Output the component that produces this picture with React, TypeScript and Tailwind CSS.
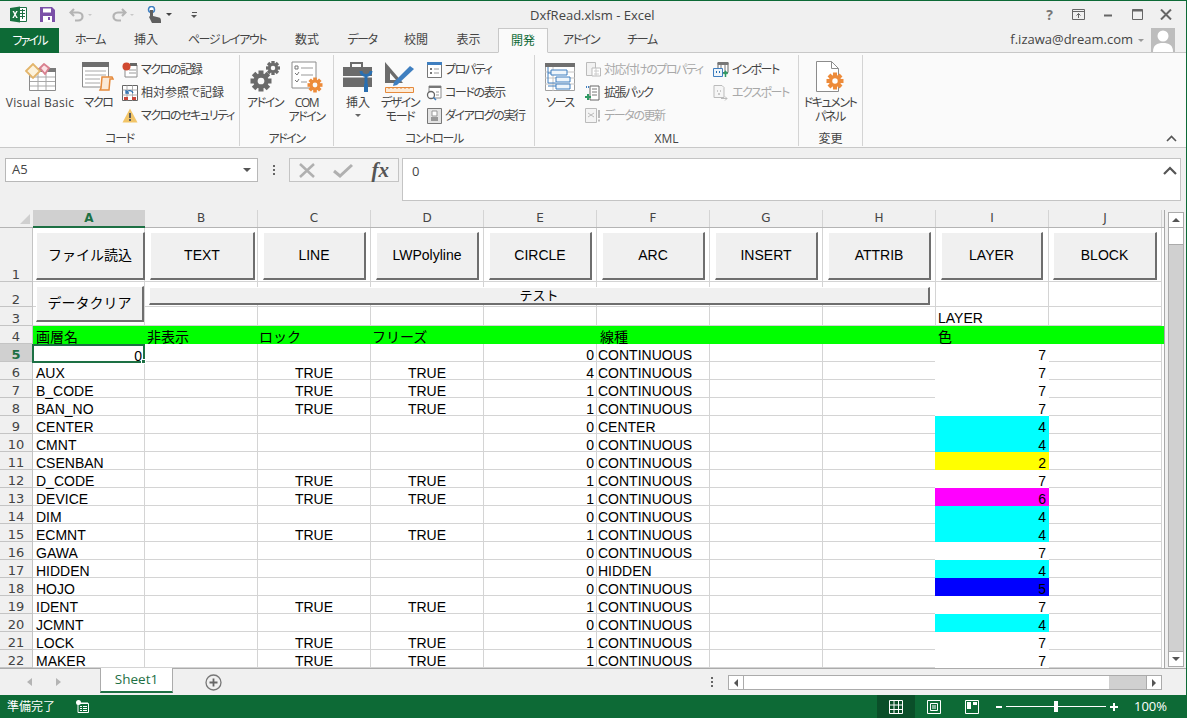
import React from "react";

const JP = "font-['Liberation_Sans','Noto_Sans_CJK_JP',sans-serif]";
const UI = "font-['Open_Sans','Noto_Sans_CJK_JP',sans-serif]";
const KANA = "tracking-[-1.4px]";
const WIDE = "tracking-normal";

const tabs = [
  { label: "ホーム", w: "w-[62px]", t: KANA },
  { label: "挿入", w: "w-[50px]", t: WIDE },
  { label: "ページ レイアウト", w: "w-[112px]", t: KANA },
  { label: "数式", w: "w-[48px]", t: WIDE },
  { label: "データ", w: "w-[62px]", t: KANA },
  { label: "校閲", w: "w-[46px]", t: WIDE },
  { label: "表示", w: "w-[59px]", t: WIDE },
];

const cols = [
  { name: "A", w: "w-[112px]" },
  { name: "B", w: "w-[113px]" },
  { name: "C", w: "w-[113px]" },
  { name: "D", w: "w-[113px]" },
  { name: "E", w: "w-[113px]" },
  { name: "F", w: "w-[113px]" },
  { name: "G", w: "w-[113px]" },
  { name: "H", w: "w-[113px]" },
  { name: "I", w: "w-[113px]" },
  { name: "J", w: "w-[113px]" },
];

// 行データ: 名前, TRUE列あり, E列, F列, I列, 色
const rows: [string, boolean, string, string, string, string][] = [
  ["0", false, "0", "CONTINUOUS", "7", "white"],
  ["AUX", true, "4", "CONTINUOUS", "7", "white"],
  ["B_CODE", true, "1", "CONTINUOUS", "7", "white"],
  ["BAN_NO", true, "1", "CONTINUOUS", "7", "white"],
  ["CENTER", false, "0", "CENTER", "4", "cyan"],
  ["CMNT", false, "0", "CONTINUOUS", "4", "cyan"],
  ["CSENBAN", false, "0", "CONTINUOUS", "2", "yellow"],
  ["D_CODE", true, "1", "CONTINUOUS", "7", "white"],
  ["DEVICE", true, "1", "CONTINUOUS", "6", "magenta"],
  ["DIM", false, "0", "CONTINUOUS", "4", "cyan"],
  ["ECMNT", true, "1", "CONTINUOUS", "4", "cyan"],
  ["GAWA", false, "0", "CONTINUOUS", "7", "white"],
  ["HIDDEN", false, "0", "HIDDEN", "4", "cyan"],
  ["HOJO", false, "0", "CONTINUOUS", "5", "blue"],
  ["IDENT", true, "1", "CONTINUOUS", "7", "white"],
  ["JCMNT", false, "0", "CONTINUOUS", "4", "cyan"],
  ["LOCK", true, "1", "CONTINUOUS", "7", "white"],
  ["MAKER", true, "1", "CONTINUOUS", "7", "white"],
];

const fill: Record<string, string> = {
  white: "bg-white border-white",
  cyan: "bg-[#00ffff] border-[#00ffff]",
  yellow: "bg-[#ffff00] border-[#ffff00]",
  magenta: "bg-[#ff00ff] border-[#ff00ff]",
  blue: "bg-[#0000ff] border-[#0000ff]",
};

const sheetButtons = [
  { label: "ファイル読込", pos: "left-[36px] w-[109px]" },
  { label: "TEXT", pos: "left-[150px] w-[105px]" },
  { label: "LINE", pos: "left-[263px] w-[103px]" },
  { label: "LWPolyline", pos: "left-[376px] w-[103px]" },
  { label: "CIRCLE", pos: "left-[489px] w-[103px]" },
  { label: "ARC", pos: "left-[602px] w-[103px]" },
  { label: "INSERT", pos: "left-[715px] w-[103px]" },
  { label: "ATTRIB", pos: "left-[828px] w-[103px]" },
  { label: "LAYER", pos: "left-[941px] w-[102px]" },
  { label: "BLOCK", pos: "left-[1053px] w-[104px]" },
];

function Big({ icon, lines, w, arrow, t = KANA }: { icon: React.ReactNode; lines: string[]; w: string; arrow?: boolean; t?: string }) {
  return (
    <div className={`${w} shrink-0 flex flex-col items-center`}>
      <div className="h-[38px] flex items-center justify-center">{icon}</div>
      {lines.map((l) => (
        <div key={l} className={`h-[14px] leading-[14px] text-[12px] text-[#444] whitespace-nowrap [font-feature-settings:'palt'] ${t}`}>
          {l}
        </div>
      ))}
      {arrow && <div className="mt-[4px] w-0 h-0 border-x-[3px] border-t-[3px] border-x-transparent border-t-[#666]" />}
    </div>
  );
}

function Small({ icon, label, off, t = KANA }: { icon: React.ReactNode; label: string; off?: boolean; t?: string }) {
  return (
    <div className="h-[23px] flex items-center gap-[3px] whitespace-nowrap">
      <div className="w-[16px] h-[16px] flex items-center justify-center shrink-0">{icon}</div>
      <span className={`text-[12px] [font-feature-settings:'palt'] ${t} ${off ? "text-[#a8a8a8]" : "text-[#444]"}`}>{label}</span>
    </div>
  );
}

function Group({ w, label, children, t = KANA }: { w: string; label: string; children: React.ReactNode; t?: string }) {
  return (
    <div className={`${w} shrink-0 h-[91px] border-r border-[#d4d4d4] flex flex-col`}>
      <div className="flex-1 flex pt-[3px]">{children}</div>
      <div className={`h-[15px] leading-[15px] text-center text-[12px] text-[#444] [font-feature-settings:'palt'] ${t}`}>{label}</div>
    </div>
  );
}

const Gear = ({ x, y, r, c, hole = "#fafafa" }: { x: number; y: number; r: number; c: string; hole?: string }) => (
  <g>
    {[0, 45, 90, 135].map((a) => (
      <rect key={a} x={x - r * 0.24} y={y - r} width={r * 0.48} height={r * 2} fill={c} transform={`rotate(${a} ${x} ${y})`} />
    ))}
    <circle cx={x} cy={y} r={r * 0.72} fill={c} />
    <circle cx={x} cy={y} r={r * 0.32} fill={hole} />
  </g>
);

const VbIcon = (
  <svg width="31" height="28" viewBox="0 0 31 28">
    <path d="M4.500 5.500h26v22h-26z" fill="#fff" stroke="#8c8c8c" />
    <path d="M4 5h27v4H4z" fill="#7a7a7a" />
    <path d="M5 14h25M5 18.500h25M5 23h25M13 9v18M21 9v18" stroke="#a8a8a8" />
    <path d="M1 8l7-7 7 7-7 7z" fill="#fdf3dc" stroke="#e3b56b" strokeWidth="1.800" />
    <path d="M15 5l4-4 5 4-4 6z" fill="#fbe3e6" stroke="#d9808f" strokeWidth="1.800" />
  </svg>
);
const MacroIcon = (
  <svg width="32" height="30" viewBox="0 0 32 30">
    <path d="M.5 1h26v24H.5z" fill="#fff" stroke="#8c8c8c" />
    <path d="M0 0h27v5H0z" fill="#6f6f6f" />
    <path d="M3 9h21M3 13h21M3 17h15M3 21h15" stroke="#a8a8a8" />
    <path d="M20 15h10l1 2h-3l-1 11h-9l1-2z" fill="#fbe9d7" stroke="#e58a3c" strokeWidth="1.500" />
  </svg>
);
const RecordIcon = (
  <svg width="16" height="16" viewBox="0 0 16 16">
    <path d="M3 3h12v12H3z" fill="#fff" stroke="#8c8c8c" />
    <path d="M8 1h7v3H8z" fill="#666" />
    <path d="M7 8h7M7 11h7" stroke="#999" />
    <circle cx="4.500" cy="4.500" r="4" fill="#d0482f" />
  </svg>
);
const RelativeIcon = (
  <svg width="16" height="16" viewBox="0 0 16 16">
    <path d="M.5.5h15v15H.5z" fill="#fff" stroke="#666" />
    <path d="M.5 5h15M.5 10h15M5 .5v15M10.500 .5v15" stroke="#aaa" />
    <path d="M2 12h4v3H2zM10 12h4v3h-4z" fill="#c9473a" />
    <path d="M5 7c1-2 5-2 6 1M4 5v3h3" fill="none" stroke="#2a6fb0" strokeWidth="1.300" />
  </svg>
);
const WarnIcon = (
  <svg width="16" height="15" viewBox="0 0 16 15">
    <path d="M8 .5L15.500 14.500H.5z" fill="#f2c568" />
    <path d="M7 5h2v5H7zM7 11h2v2H7z" fill="#5c5c5c" />
  </svg>
);
const AddinIcon = (
  <svg width="30" height="32" viewBox="0 0 30 32">
    <Gear x={11} y={20} r={10.500} c="#6b6b6b" />
    <Gear x={23} y={7} r={7} c="#6b6b6b" />
  </svg>
);
const ComIcon = (
  <svg width="32" height="32" viewBox="0 0 32 32">
    <path d="M1 1h24v26H1z" fill="#fff" stroke="#8c8c8c" />
    <path d="M4 5h3v3H4zM4 12l2 2 2-3M4 19l2 2 2-3" fill="none" stroke="#777" />
    <path d="M10 7h12M10 14h12M10 21h6" stroke="#999" />
    <Gear x={24} y={24} r={7.500} c="#ed8b3a" />
  </svg>
);
const InsertIcon = (
  <svg width="32" height="30" viewBox="0 0 32 30">
    <path d="M9 5V1h11v4" fill="none" stroke="#6b6b6b" strokeWidth="2" />
    <path d="M1 5h29v9H1zM1 15.500h29V25H1z" fill="#6b6b6b" />
    <path d="M24 13v10M19 9c0 6 10 6 10 0" fill="none" stroke="#2a6fb0" strokeWidth="3" />
    <path d="M22 22h4v8h-4z" fill="#2a6fb0" />
  </svg>
);
const DesignIcon = (
  <svg width="32" height="32" viewBox="0 0 32 32">
    <path d="M1 1l18 21H1z" fill="#6b6b6b" />
    <path d="M6 12l6 7H6z" fill="#fafafa" />
    <path d="M10 21L26 5l4 3-17 16-4 1z" fill="#3f7fc0" />
    <path d="M1.500 26.500h28v5h-28z" fill="#fdebd7" stroke="#e58a3c" />
    <path d="M5 26v2M9 26v2M13 26v2M17 26v2M21 26v2M25 26v2" stroke="#e58a3c" />
  </svg>
);
const PropIcon = (
  <svg width="15" height="16" viewBox="0 0 15 16">
    <path d="M.5.5h14v15H.5z" fill="#fff" stroke="#777" />
    <path d="M0 0h15v3H0z" fill="#3f7fc0" />
    <path d="M3 6h2v2H3zM3 10h2v2H3z" fill="#777" />
    <path d="M7 7h5M7 11h5" stroke="#999" />
  </svg>
);
const CodeIcon = (
  <svg width="16" height="16" viewBox="0 0 16 16">
    <path d="M3 1h12v12H3z" fill="#fff" stroke="#8c8c8c" />
    <path d="M3 1h12v2H3z" fill="#777" />
    <circle cx="5" cy="10" r="3.500" fill="#fff" stroke="#666" strokeWidth="1.300" />
    <path d="M7.500 12.500L10 15" stroke="#3f7fc0" strokeWidth="1.500" />
    <path d="M10 7h3M10 10h3" stroke="#999" />
  </svg>
);
const DialogIcon = (
  <svg width="15" height="16" viewBox="0 0 15 16">
    <path d="M.5.5h14v15H.5z" fill="#e4e4e4" stroke="#777" />
    <path d="M5 3h5v5H5z" fill="#fff" stroke="#999" />
    <path d="M4 9h7v4H4z" fill="#999" />
  </svg>
);
const SourceIcon = (
  <svg width="30" height="28" viewBox="0 0 30 28">
    <path d="M.5.5h29v27H.5z" fill="#fff" stroke="#a0a0a0" />
    <path d="M0 0h30v4H0z" fill="#6f6f6f" />
    <path d="M0 9h30M0 15h30M0 21h30M8 4v24" stroke="#c4c4c4" />
    <path d="M6 7h16v5H6zM11 14h14v5H11zM11 21h14v5H11z" fill="#eef5fb" stroke="#3f7fc0" />
    <path d="M3 4v16h8M3 10h3M3 23h8" fill="none" stroke="#3f7fc0" />
  </svg>
);
const MapIcon = (
  <svg width="15" height="15" viewBox="0 0 15 15">
    <path d="M.5.5h9v13h-9z" fill="#f2f2f2" stroke="#bbb" />
    <path d="M6 6h8.500v8H6z" fill="#fff" stroke="#bbb" />
    <path d="M8 9h5M8 12h5M10 6v8" stroke="#ccc" />
  </svg>
);
const PackIcon = (
  <svg width="16" height="16" viewBox="0 0 16 16">
    <path d="M5 1h9v14H5z" fill="#fff" stroke="#666" />
    <path d="M7 4h5M7 7h5M7 10h5" stroke="#777" />
    <path d="M3 9v6M0 12h6" stroke="#2f9a63" strokeWidth="2" />
    <path d="M1 2h3" stroke="#3f7fc0" strokeWidth="2" strokeDasharray="1 1" />
  </svg>
);
const RefreshIcon = (
  <svg width="16" height="15" viewBox="0 0 16 15">
    <path d="M.5.5h11v14H.5z" fill="#f4f4f4" stroke="#bbb" />
    <path d="M3 5l3 2-3 2M9 5L6 7l3 2" fill="none" stroke="#bbb" />
    <path d="M14 2v8M14 11.500v2" stroke="#bbb" strokeWidth="2" />
  </svg>
);
const ImportIcon = (
  <svg width="16" height="16" viewBox="0 0 16 16">
    <path d="M5 .5h10v10H5z" fill="#fff" stroke="#666" />
    <path d="M5 .5h10v2H5zM8 3v7M12 3v7" fill="#777" stroke="#777" />
    <path d="M.5 6.500h9v8h-9z" fill="#eef5fb" stroke="#3f7fc0" />
    <path d="M3 10h1M6 10h1" stroke="#2a6fb0" strokeWidth="2" />
    <path d="M12.500 15v-5M10.500 12l2-2.500 2 2.500" fill="none" stroke="#2f9a63" strokeWidth="1.500" />
  </svg>
);
const ExportIcon = (
  <svg width="16" height="16" viewBox="0 0 16 16">
    <path d="M1 .5h8l2 2v10H1z" fill="#f6f6f6" stroke="#bbb" />
    <path d="M4 6h1M7 6h1M5 9h2" stroke="#bbb" strokeWidth="1.500" />
    <path d="M8 13.500h6M12 11.500l2 2-2 2" fill="none" stroke="#bbb" />
  </svg>
);
const DocIcon = (
  <svg width="30" height="32" viewBox="0 0 30 32">
    <path d="M1.500.5h15l7 7v23h-22z" fill="#fff" stroke="#8c8c8c" />
    <path d="M16.500.5v7h7" fill="none" stroke="#8c8c8c" />
    <Gear x={20} y={20} r={8.500} c="#ed8b3a" hole="#fff" />
  </svg>
);

export default function App() {
  return (
    <div className={`w-[1187px] h-[718px] overflow-hidden flex flex-col bg-[#f0f0f0] border-t border-t-[#0d6a36] border-r border-r-[#0d6a36] ${UI}`}>
      {/* タイトルバー */}
      <div className="h-[27px] shrink-0 flex items-center relative">
        <div className="flex items-center pl-[10px]">
          <svg width="17" height="17" viewBox="0 0 17 17">
            <path d="M8 1.500h8.500v14H8z" fill="#fff" stroke="#1d7044" />
            <path d="M10 4.500h5M10 7.500h5M10 10.500h5M12.500 3v10" stroke="#1d7044" />
            <path d="M0 2l10-1.500v16L0 15z" fill="#1a7341" />
            <path d="M2.500 5l1.500 0 1 2 1.200-2h1.500L5.800 8.500 7.800 12H6.200L5 9.800 3.800 12H2.300l2-3.500z" fill="#fff" />
          </svg>
          <svg className="ml-[13px]" width="15" height="15" viewBox="0 0 15 15">
            <path d="M0 0h12l3 3v12H0z" fill="#7b4fa8" />
            <path d="M3 1.500h8v4H3z" fill="#fff" />
            <path d="M3 9h9v6H3z" fill="#fff" />
            <path d="M8 10h2v3H8z" fill="#7b4fa8" />
          </svg>
          <svg className="ml-[14px]" width="16" height="14" viewBox="0 0 16 14">
            <path d="M5 1L1.500 4.500 5 8M2 4.500h7c6 0 6 8 0 8H6" fill="none" stroke="#b4b4b4" strokeWidth="2.200" />
          </svg>
          <div className="ml-[3px] w-0 h-0 border-x-[2.500px] border-t-[2.500px] border-x-transparent border-t-[#c8c8c8]" />
          <svg className="ml-[19px]" width="16" height="14" viewBox="0 0 16 14">
            <path d="M11 1l3.500 3.500L11 8M14 4.500H7c-6 0-6 8 0 8h3" fill="none" stroke="#b4b4b4" strokeWidth="2.200" />
          </svg>
          <div className="ml-[3px] w-0 h-0 border-x-[2.500px] border-t-[2.500px] border-x-transparent border-t-[#c8c8c8]" />
          <svg className="ml-[13px]" width="16" height="17" viewBox="0 0 16 17">
            <circle cx="4.500" cy="3.500" r="3" fill="#fff" stroke="#3f7fc0" strokeWidth="1.500" />
            <path d="M3 4h3v6l6 1.500c2 .5 2 2 2 5.500H5L2 11l1-1z" fill="#5f5f5f" />
          </svg>
          <div className="ml-[3px] w-0 h-0 border-x-[3px] border-t-[3px] border-x-transparent border-t-[#444]" />
          <div className="ml-[19px] flex flex-col items-center gap-[2px]">
            <div className="w-[5px] h-px bg-[#555]" />
            <div className="w-0 h-0 border-x-[3px] border-t-[3px] border-x-transparent border-t-[#555]" />
          </div>
        </div>
        <div className="absolute left-[530px] top-[6px] text-[13px] leading-[16px] text-[#444] whitespace-nowrap">DxfRead.xlsm - Excel</div>
        <div className="ml-auto flex items-center h-full text-[#666]">
          <span className="w-[29px] text-center font-bold text-[14px] text-[#777]">?</span>
          <svg width="29" height="11" viewBox="0 0 29 11">
            <path d="M8.500 .5h12v10h-12z" fill="none" stroke="#666" />
            <path d="M8.500 2.500h12M14.500 9V4.500M12.500 6.500l2-2 2 2" fill="none" stroke="#666" />
          </svg>
          <svg width="30" height="11" viewBox="0 0 30 11">
            <path d="M11 6.500h8" stroke="#666" strokeWidth="2" />
          </svg>
          <svg width="29" height="11" viewBox="0 0 29 11">
            <path d="M9.500 .5h10v10h-10z" fill="none" stroke="#666" />
            <path d="M9.500 1.500h10" stroke="#666" strokeWidth="2" />
          </svg>
          <svg className="mr-[6px]" width="28" height="11" viewBox="0 0 28 11">
            <path d="M9 .5l10 10M19 .5l-10 10" stroke="#666" strokeWidth="2" />
          </svg>
        </div>
      </div>

      {/* タブ */}
      <div className="h-[25px] shrink-0 flex border-b border-[#c8c8c8] text-[12px] text-[#444] relative [font-feature-settings:'palt']">
        <div className="w-[59px] h-[25px] bg-[#0d6a36] text-white flex items-center justify-center tracking-[-1.8px]">ファイル</div>
        {tabs.map((t) => (
          <div key={t.label} className={`${t.w} ${t.t} flex items-center justify-center whitespace-nowrap`}>{t.label}</div>
        ))}
        <div className="w-[50px] h-[25px] bg-[#fafafa] border border-[#c8c8c8] border-b-[#fafafa] text-[#0d6a36] flex items-center justify-center">開発</div>
        <div className={`w-[66px] flex items-center justify-center ${KANA}`}>アドイン</div>
        <div className={`w-[56px] flex items-center justify-center ${KANA}`}>チーム</div>
        <div className="ml-auto flex items-center h-[24px] pr-[11px]">
          <span className="text-[13px] text-[#444] [font-feature-settings:normal]">f.izawa@dream.com</span>
          <div className="ml-[5px] w-0 h-0 border-x-[3px] border-t-[3px] border-x-transparent border-t-[#999]" />
          <div className="ml-[7px] w-[24px] h-[24px] bg-[#bdbdbd] overflow-hidden">
            <svg width="24" height="24" viewBox="0 0 24 24">
              <circle cx="12" cy="8" r="5.500" fill="#fff" />
              <path d="M2 24c0-7 4-9 10-9s10 2 10 9z" fill="#fff" />
            </svg>
          </div>
        </div>
      </div>

      {/* リボン */}
      <div className="h-[95px] shrink-0 bg-[#fafafa] border-b border-[#c8c8c8] flex pt-[2px] relative">
        <Group w="w-[240px]" label="コード">
          <Big w="w-[80px]" t="tracking-[0.3px]" icon={VbIcon} lines={["Visual Basic"]} />
          <Big w="w-[36px]" icon={MacroIcon} lines={["マクロ"]} />
          <div className="pl-[6px]">
            <Small icon={RecordIcon} label="マクロの記録" />
            <Small t={WIDE} icon={RelativeIcon} label="相対参照で記録" />
            <Small icon={WarnIcon} label="マクロのセキュリティ" />
          </div>
        </Group>
        <Group w="w-[94px]" label="アドイン">
          <Big w="w-[50px]" icon={AddinIcon} lines={["アドイン"]} />
          <Big w="w-[33px]" icon={ComIcon} lines={["COM", "アドイン"]} />
        </Group>
        <Group w="w-[201px]" label="コントロール">
          <Big w="w-[48px]" t={WIDE} icon={InsertIcon} lines={["挿入"]} arrow />
          <Big w="w-[36px]" icon={DesignIcon} lines={["デザイン", "モード"]} />
          <div className="pl-[8px]">
            <Small icon={PropIcon} label="プロパティ" />
            <Small icon={CodeIcon} label="コードの表示" />
            <Small icon={DialogIcon} label="ダイアログの実行" />
          </div>
        </Group>
        <Group w="w-[264px]" t={WIDE} label="XML">
          <Big w="w-[50px]" icon={SourceIcon} lines={["ソース"]} />
          <div className="w-[128px]">
            <Small off icon={MapIcon} label="対応付けのプロパティ" />
            <Small icon={PackIcon} label="拡張パック" />
            <Small off icon={RefreshIcon} label="データの更新" />
          </div>
          <div>
            <Small icon={ImportIcon} label="インポート" />
            <Small off icon={ExportIcon} label="エクスポート" />
          </div>
        </Group>
        <Group w="w-[64px]" t={WIDE} label="変更">
          <Big w="w-[62px]" icon={DocIcon} lines={["ドキュメント", "パネル"]} />
        </Group>
        <svg className="absolute left-[1166px] top-[82px]" width="11" height="7" viewBox="0 0 11 7">
          <path d="M1 6l4.500-4.500L10 6" fill="none" stroke="#555" strokeWidth="1.600" />
        </svg>
      </div>

      {/* 数式バー */}
      <div className="h-[62px] shrink-0 flex pt-[10px] pl-[5px] pr-[5px] text-[13px] text-[#444]">
        <div className="w-[253px] h-[24px] bg-white border border-[#b8b8b8] flex items-center pl-[6px] pr-[6px]">
          <span className="flex-1">A5</span>
          <div className="w-0 h-0 border-x-[4px] border-t-[4px] border-x-transparent border-t-[#555]" />
        </div>
        <div className="w-[31px] h-[24px] flex flex-col items-center justify-center gap-[2px]">
          <div className="w-[2px] h-[2px] bg-[#666]" />
          <div className="w-[2px] h-[2px] bg-[#666]" />
          <div className="w-[2px] h-[2px] bg-[#666]" />
        </div>
        <div className="w-[110px] h-[24px] bg-[#f4f4f4] border border-[#c4c4c4] flex items-center justify-between pl-[9px] pr-[9px]">
          <svg width="16" height="15" viewBox="0 0 16 15"><path d="M1 1l14 13M15 1L1 14" stroke="#b0b0b0" strokeWidth="2.500" /></svg>
          <svg width="20" height="15" viewBox="0 0 20 15"><path d="M1 8l6 5L19 2" fill="none" stroke="#b0b0b0" strokeWidth="3" /></svg>
          <span className="font-['Liberation_Serif',serif] italic font-bold text-[21px] leading-none text-[#555]">fx</span>
        </div>
        <div className="ml-[3px] w-[779px] h-[43px] bg-white border border-[#c4c4c4] flex pl-[9px] pt-[3px] pr-[3px]">
          <span className="flex-1">0</span>
          <svg className="mt-[4px]" width="14" height="9" viewBox="0 0 14 9"><path d="M1 8l6-6 6 6" fill="none" stroke="#555" strokeWidth="2.200" /></svg>
        </div>
      </div>

      {/* シート */}
      <div className={`h-[458px] shrink-0 flex ${JP} text-[14px] text-black`}>
        <div className="w-[1165px] flex flex-col border-r border-[#a8a8a8] overflow-hidden">
          <div className="h-[18px] shrink-0 flex border-b border-[#b4b4b4] text-[#444] font-['DejaVu_Sans',sans-serif] text-[12px]">
            <div className="w-[33px] shrink-0 flex items-end justify-end pr-[3px] pb-[3px]">
              <div className="w-0 h-0 border-l-[10px] border-b-[10px] border-l-transparent border-b-[#cfcfcf]" />
            </div>
            {cols.map((c) =>
              c.name === "A" ? (
                <div key={c.name} className={`${c.w} shrink-0 bg-[#d0d0d0] border-b-2 border-[#1d7044] -mb-px text-center text-[#1d7044] font-bold leading-[16px]`}>{c.name}</div>
              ) : (
                <div key={c.name} className={`${c.w} shrink-0 border-r border-[#d4d4d4] text-center leading-[16px]`}>{c.name}</div>
              )
            )}
          </div>

          <div className="relative flex-1 bg-white overflow-hidden">
            <Row n="1" h="h-[54px]" />
            <Row n="2" h="h-[25px]" />
            <Row n="3" h="h-[19px]" i="LAYER" />
            <div className="h-[18px] flex">
              <div className="w-[33px] shrink-0 bg-[#f0f0f0] border-r border-b border-[#c4c4c4] text-center leading-[22px] text-[#444] font-['DejaVu_Sans',sans-serif] text-[13px]">4</div>
              <div className="flex-1 bg-[#00ff00] flex leading-[22px] text-[14px]">
                <span className="w-[112px] pl-[3px]">画層名</span>
                <span className="w-[113px] pl-[2px]">非表示</span>
                <span className="w-[113px] pl-[1px]">ロック</span>
                <span className="w-[226px] pl-[1px]">フリーズ</span>
                <span className="w-[339px] pl-[3px]">線種</span>
                <span className="pl-[2px]">色</span>
              </div>
            </div>
            {rows.map((r, i) => (
              <DataRow key={r[0]} n={String(i + 5)} r={r} active={i === 0} />
            ))}

            {/* シート上のボタン */}
            {sheetButtons.map((b) => (
              <div key={b.label} className={`absolute top-[4px] h-[48px] ${b.pos} bg-[#f0f0f0] border-t border-l border-white border-r-2 border-b-2 border-r-[#6e6e6e] border-b-[#6e6e6e] flex items-center justify-center text-[14px] whitespace-nowrap`}>
                {b.label}
              </div>
            ))}
            <div className="absolute top-[58px] left-[36px] w-[108px] h-[36px] bg-[#f0f0f0] border-t border-l border-white border-r-2 border-b-2 border-r-[#6e6e6e] border-b-[#6e6e6e] flex items-center justify-center">データクリア</div>
            <div className="absolute top-[59px] left-[149px] w-[781px] h-[18px] bg-[#f0f0f0] border-t border-l border-white border-r-2 border-b-2 border-r-[#6e6e6e] border-b-[#6e6e6e] flex items-center justify-center text-[13px] leading-none">テスト</div>
          </div>
        </div>

        {/* 縦スクロールバー */}
        <div className="w-[21px] shrink-0 pl-[3px] pt-[2px] pb-[1px] flex flex-col">
          <div className="w-[16px] flex-1 flex flex-col bg-[#d0d0d0] border border-[#ababab]">
            <div className="h-[15px] bg-white border-b border-[#ababab] flex items-center justify-center">
              <div className="w-0 h-0 border-x-[4px] border-b-[4px] border-x-transparent border-b-[#555]" />
            </div>
            <div className="h-[17px] bg-white border-b border-[#ababab]" />
            <div className="flex-1" />
            <div className="h-[15px] bg-white border-t border-[#ababab] flex items-center justify-center">
              <div className="w-0 h-0 border-x-[4px] border-t-[4px] border-x-transparent border-t-[#555]" />
            </div>
          </div>
        </div>
      </div>

      {/* シートタブ */}
      <div className="h-[27px] shrink-0 flex text-[#999] relative border-t border-[#ababab]">
        <div className="w-[100px] flex items-center pl-[27px] gap-[24px] pb-[1px]">
          <div className="w-0 h-0 border-y-[4px] border-r-[5px] border-y-transparent border-r-[#b4b4b4]" />
          <div className="w-0 h-0 border-y-[4px] border-l-[5px] border-y-transparent border-l-[#b4b4b4]" />
        </div>
        <div className="w-[73px] h-[25px] -mt-px bg-white border-x border-[#ababab] border-b-2 border-b-[#1d7044] text-[#1d7044] text-[13.500px] flex items-center justify-center">Sheet1</div>
        <div className="ml-[32px] mt-[5px] w-[17px] h-[16px]">
          <svg width="17" height="17" viewBox="0 0 17 17">
            <circle cx="8.500" cy="8.500" r="7.500" fill="none" stroke="#777" strokeWidth="1.300" />
            <path d="M8.500 4.500v8M4.500 8.500h8" stroke="#666" strokeWidth="1.800" />
          </svg>
        </div>
        <div className="ml-[481px] w-[17px] flex flex-col items-center justify-center gap-[2px] pb-[1px]">
          <div className="w-[2px] h-[2px] bg-[#666]" />
          <div className="w-[2px] h-[2px] bg-[#666]" />
          <div className="w-[2px] h-[2px] bg-[#666]" />
        </div>
        <div className="ml-[8px] mt-[6px] w-[434px] h-[15px] bg-[#d0d0d0] border border-[#ababab] flex">
          <div className="w-[15px] bg-white border-r border-[#ababab] flex items-center justify-center">
            <div className="w-0 h-0 border-y-[4px] border-r-[4px] border-y-transparent border-r-[#555]" />
          </div>
          <div className="w-[365px] bg-white" />
          <div className="flex-1" />
          <div className="w-[15px] bg-white border-l border-[#ababab] flex items-center justify-center">
            <div className="w-0 h-0 border-y-[4px] border-l-[4px] border-y-transparent border-l-[#555]" />
          </div>
        </div>
      </div>

      {/* ステータスバー */}
      <div className="flex-1 bg-[#0d6a36] text-white text-[12px] flex items-center pl-[7px]">
        <span className="w-[69px] [font-feature-settings:'palt']">準備完了</span>
        <svg width="13" height="13" viewBox="0 0 13 13">
          <path d="M2 3.500h10.500v9H2z" fill="none" stroke="#fff" />
          <circle cx="2.500" cy="2.500" r="2.500" fill="#fff" />
          <path d="M5 3h7M4 6.500h2M4 8.500h2M4 10.500h2M7 6.500h4M7 8.500h4M7 10.500h4" stroke="#fff" />
        </svg>
        <div className="ml-[788px] w-[38px] h-[23px] bg-[#0a4f29] flex items-center justify-center">
          <svg width="14" height="14" viewBox="0 0 14 14"><path d="M.5.5h13v13H.5zM.5 5h13M.5 9.500h13M5 .5v13M9.500 .5v13" fill="none" stroke="#fff" /></svg>
        </div>
        <svg className="ml-[12px]" width="14" height="14" viewBox="0 0 14 14"><path d="M.5.5h13v13H.5z" fill="none" stroke="#fff" /><path d="M3.500 3.500h7v7h-7zM5 6h4M5 8h4" fill="none" stroke="#fff" /></svg>
        <svg className="ml-[24px]" width="14" height="14" viewBox="0 0 14 14"><path d="M.5.5h13v13H.5z" fill="none" stroke="#fff" /><path d="M2 2h4v7H2zM8 2h4v3H8z" fill="#fff" /></svg>
        <div className="ml-[17px] w-[6px] h-[2px] bg-white" />
        <div className="ml-[4px] w-[100px] h-[1px] bg-white relative">
          <div className="absolute left-[48px] -top-[5px] w-[4px] h-[11px] bg-white" />
        </div>
        <div className="ml-[4px] w-[8px] h-[8px] relative">
          <div className="absolute left-0 top-[3px] w-[8px] h-[2px] bg-white" />
          <div className="absolute left-[3px] top-0 w-[2px] h-[8px] bg-white" />
        </div>
        <span className="ml-[16px] text-[13px]">100%</span>
      </div>
    </div>
  );
}

function Row({ n, h, i }: { n: string; h: string; i?: string }) {
  return (
    <div className={`${h} flex`}>
      <div className="w-[33px] shrink-0 bg-[#f0f0f0] border-r border-b border-[#c4c4c4] flex items-end justify-center text-[#444] font-['DejaVu_Sans',sans-serif] text-[13px] leading-[12px]">{n}</div>
      {cols.map((c) => (
        <div key={c.name} className={`${c.w} shrink-0 border-r border-b border-[#d4d4d4] pl-[2px] flex items-end leading-[13px]`}>
          {c.name === "I" ? i : null}
        </div>
      ))}
    </div>
  );
}

function DataRow({ n, r, active }: { n: string; r: (typeof rows)[number]; active: boolean }) {
  const base = "h-[18px] shrink-0 border-r border-b border-[#d4d4d4] leading-[22px] whitespace-nowrap";
  return (
    <div className="h-[18px] flex">
      <div className={`w-[33px] shrink-0 border-r border-b border-[#c4c4c4] text-center font-['DejaVu_Sans',sans-serif] text-[13px] leading-[22px] ${active ? "bg-[#d0d0d0] text-[#1d7044] font-bold" : "bg-[#f0f0f0] text-[#444]"}`}>{n}</div>
      {active ? (
        <div className="w-[113px] h-[19px] shrink-0 border-2 border-[#1d7044] -ml-px text-right pr-[1px] leading-[20px] relative z-10 -mb-px">
          {r[0]}
          <div className="absolute -right-[3px] -bottom-[3px] w-[5px] h-[5px] bg-[#1d7044] border border-white" />
        </div>
      ) : (
        <div className={`w-[112px] pl-[3px] ${base}`}>{r[0]}</div>
      )}
      <div className={`w-[113px] ${base}`} />
      <div className={`w-[113px] text-center ${base}`}>{r[1] ? "TRUE" : ""}</div>
      <div className={`w-[113px] text-center ${base}`}>{r[1] ? "TRUE" : ""}</div>
      <div className={`w-[113px] text-right pr-[2px] ${base}`}>{r[2]}</div>
      <div className={`w-[113px] pl-[1px] ${base}`}>{r[3]}</div>
      <div className={`w-[113px] ${base}`} />
      <div className={`w-[113px] ${base}`} />
      <div className={`w-[114px] -ml-px h-[18px] shrink-0 border-b border-r text-right pr-[2px] leading-[22px] ${fill[r[5]]}`}>{r[4]}</div>
      <div className={`w-[113px] ${base}`} />
    </div>
  );
}
